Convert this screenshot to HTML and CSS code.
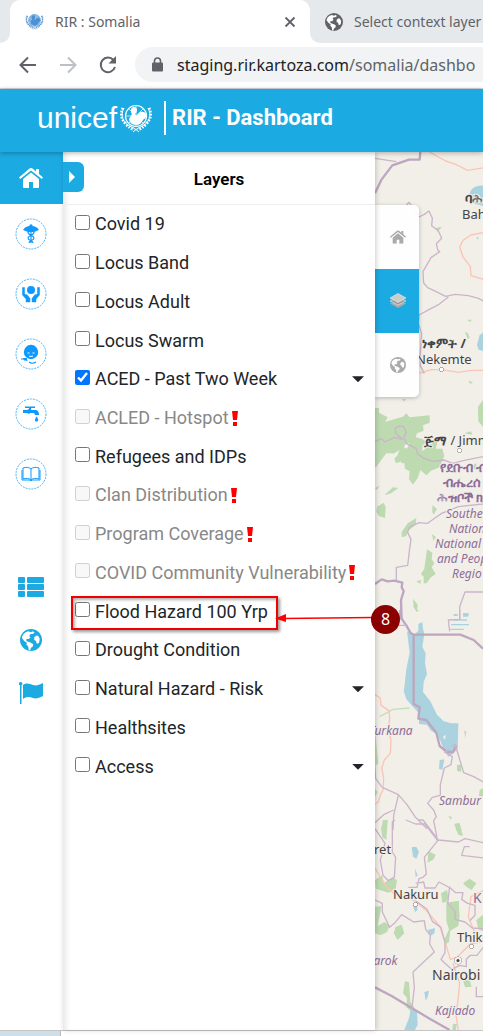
FILE: index.html
```html
<!DOCTYPE html>
<html lang="en">
<head>
<meta charset="utf-8">
<meta name="viewport" content="width=device-width, initial-scale=1">
<title>RIR : Somalia</title>
<link rel="stylesheet" href="styles.css">
</head>
<body>
<svg class="defs" aria-hidden="true">
  <symbol id="globe" viewBox="0 0 24 24"><circle cx="12" cy="12" r="12" fill="currentColor"/><path class="land" d="M9 2.500l3 1 2-1 2 1.500-2 1.500-2.500 0-1.500 2.500 1.500 1-2 2-2.500 0 0 2 2 1 3 1 2.500 1.500-.500 2.500-2 1.500-1 3-1.500-.500-.500-4-2-2 .500-2-3-2-2.500-3.500C2.500 6.500 5 3.500 9 2.500zM15.500 9l2.500-2 2 .500 1.500 3-.500 4-1.500 1.500-1.500-.500-.500-2.500-2-1z"/></symbol>
  <symbol id="home" viewBox="0 0 24 20"><path fill="currentColor" d="M12 4.500 20 11v8q0 1-1 1h-5v-6h-4v6H5q-1 0-1-1v-8zM12 0q.8 0 1.500.6L17 3.500V1h3v5l4 3.500-1.200 1.500L12 2.500 1.200 11 0 9.500 10.500.6Q11.200 0 12 0z"/></symbol>
  <symbol id="emblem" viewBox="0 0 32 30"><g fill="none" stroke="currentColor"><circle cx="16" cy="13" r="10.500" stroke-width="1.200"/><path d="M6 13h20M16 3v20M9 6l14 14M23 6 9 20" stroke-width=".7"/><path d="M4 5C0 12 2 21 14 25l5 4M28 5c4 7 2 16-10 20l-5 4" stroke-width="1"/><path d="M3 5Q-1 13 5 20T14 26M29 5q4 8-2 15t-9 6" stroke-width="2.800" stroke-dasharray="1.700 1.300"/></g><path fill="currentColor" d="M11 7c0-4 6-4 6 0 0 2-1 3-2 4l2 3c0-5 7-7 9-3 1 4-2 5-3 6-1 3-4 5-7 5-4 0-7-3-7-6l3-5c-1-1-1-2-1-4z"/></symbol>
</svg>

<nav class="tabs" aria-label="Browser tabs">
  <span class="tab-edge"></span>
  <div class="tab active">
    <svg class="favicon blue" viewBox="0 0 32 30"><circle cx="16" cy="13" r="10" fill="#4a90d2" opacity=".6"/><use href="#emblem"/></svg>
    <span class="tab-title">RIR : Somalia</span>
    <button class="plain close" aria-label="Close tab"><svg width="12" height="12" viewBox="0 0 12 12"><path d="m1.500 1.500 9 9m0-9-9 9" stroke="#5f6368" stroke-width="1.800"/></svg></button>
  </div>
  <div class="tab next">
    <svg class="tab-globe" width="18" height="18" viewBox="0 0 24 24"><use href="#globe"/></svg>
    <span class="tab-title">Select context layer</span>
  </div>
</nav>

<div class="toolbar">
  <button class="plain" aria-label="Back"><svg width="18" height="18" viewBox="0 0 18 18" fill="none" stroke="#5f6368" stroke-width="2"><path d="M17 9H2M9 1.500 1.500 9 9 16.500"/></svg></button>
  <button class="plain" aria-label="Forward" disabled><svg width="18" height="18" viewBox="0 0 18 18" fill="none" stroke="#bdc1c6" stroke-width="2"><path d="M1 9h15M9 1.500 16.500 9 9 16.500"/></svg></button>
  <button class="plain" aria-label="Reload"><svg width="18" height="18" viewBox="0 0 18 18"><path d="M14.500 4A7.300 7.300 0 1 0 16 11" fill="none" stroke="#5f6368" stroke-width="2"/><path d="M17 0v7.500h-7.500z" fill="#5f6368"/></svg></button>
  <div class="address">
    <svg width="11" height="15" viewBox="0 0 11 15"><path d="M2.500 6V4a3 3 0 0 1 6 0v2" fill="none" stroke="#5f6368" stroke-width="1.600"/><rect y="5.500" width="11" height="9" rx="1" fill="#5f6368"/></svg>
    <span class="url">staging.rir.kartoza.com<span class="path">/somalia/dashbo</span></span>
  </div>
</div>

<header class="header">
  <span class="brand">unicef</span>
  <svg class="brand-emblem" viewBox="0 0 32 30"><use href="#emblem"/></svg>
  <h1>RIR - Dashboard</h1>
</header>

<main class="main">
  <nav class="sidebar" aria-label="Sections">
    <a class="side-home" href="#home" aria-label="Home"><svg width="24" height="20"><use href="#home"/></svg></a>
    <div class="side-group circles">
      <a href="#health" aria-label="Health"><svg viewBox="0 0 32 32"><circle class="ring" cx="16" cy="16" r="15"/><path d="M8 12c2-3 4-4 7-4h2c3 0 5 1 7 4-2 1-3 1-5 2h-6c-2-1-3-1-5-2z"/><circle cx="16" cy="8" r="1.700"/><path d="M16 8v17M13 14c0 4 6 3 6 6s-5 2-5 5M19 14c0 4-6 3-6 6s5 2 5 5" fill="none" stroke="currentColor" stroke-width="1.200"/></svg></a>
      <a href="#protection" aria-label="Protection"><svg viewBox="0 0 32 32"><circle class="ring" cx="16" cy="16" r="15"/><circle cx="16" cy="12" r="4"/><path d="M7.500 9.500h2v6l1.500 1.500 1-.500 3 4v3.500h-4v-3l-3.500-4zM24.500 9.500h-2v6L21 17l-1-.500-3 4v3.500h4v-3l3.500-4z" stroke="currentColor" stroke-width=".5"/></svg></a>
      <a href="#nutrition" aria-label="Nutrition"><svg viewBox="0 0 32 32"><circle class="ring" cx="16" cy="16" r="15"/><circle cx="16" cy="14" r="7.200"/><path d="M12.500 15h2m3 0h2M14 18q2 1 4 0" stroke="#fff" fill="none"/><path d="M6 21h4l2.500 1.500M14 24q3 2.500 7 0" stroke="currentColor" stroke-width="1.200" fill="none"/><path d="M8 20h4v2.500H9z"/></svg></a>
      <a href="#water" aria-label="Water"><svg viewBox="0 0 32 32"><circle class="ring" cx="16" cy="16" r="15"/><path d="M10 8.500h10v1.500h-4v2h4c3 0 4 2 4 5h-4q0-2-2-2h-3l-1 1-2-1H8v-3h4l2-1v-1h-4zM21.500 18.500c3 4 1.500 5 0 5s-2.500-1 0-5z"/></svg></a>
      <a href="#education" aria-label="Education"><svg viewBox="0 0 32 32"><circle class="ring" cx="16" cy="16" r="15"/><path d="M16 11c-2-2-5-2-8-1v11c3-1 6-1 8 1 2-2 5-2 8-1V10c-3-1-6-1-8 1zv11M7 12v10h8l1 1 1-1h8V12" fill="none" stroke="currentColor" stroke-width="1"/></svg></a>
    </div>
    <div class="side-group tools">
      <a href="#list" aria-label="List"><svg width="26" height="20" viewBox="0 0 26 20" fill="currentColor"><rect width="7" height="6" rx="1"/><rect x="9" width="17" height="6" rx="1"/><rect y="7" width="7" height="6" rx="1"/><rect x="9" y="7" width="17" height="6" rx="1"/><rect y="14" width="7" height="6" rx="1"/><rect x="9" y="14" width="17" height="6" rx="1"/></svg></a>
      <a href="#world" aria-label="World"><svg width="22" height="22"><use href="#globe"/></svg></a>
      <a href="#flag" aria-label="Flag"><svg width="24" height="22" viewBox="0 0 24 22" fill="currentColor"><circle cx="1.700" cy="1.800" r="1.800"/><path d="M1 2h1.500v20H1zM4 3c4-3 7-1 10 0s6 0 10-2v13c-4 2-7 3-10 2s-6-2-10 1z"/></svg></a>
    </div>
  </nav>

  <section class="panel" aria-labelledby="layers-title">
    <button class="collapse" aria-label="Toggle panel"><svg width="6" height="12" viewBox="0 0 6 12"><path d="M0 0v12l6-6z" fill="#fff"/></svg></button>
    <h2 id="layers-title">Layers</h2>
    <ul class="layers">
      <li><label><input type="checkbox">Covid 19</label></li>
      <li><label><input type="checkbox">Locus Band</label></li>
      <li><label><input type="checkbox">Locus Adult</label></li>
      <li><label><input type="checkbox">Locus Swarm</label></li>
      <li><label><input type="checkbox" checked>ACED - Past Two Week</label><button class="caret" aria-label="Expand ACED"></button></li>
      <li class="off"><label><input type="checkbox" disabled>ACLED - Hotspot</label><svg class="warn" viewBox="0 0 6 15"><path d="M0 0h6L5 9H1zM1 11h4v4H1z"/></svg></li>
      <li><label><input type="checkbox">Refugees and IDPs</label></li>
      <li class="off"><label><input type="checkbox" disabled>Clan Distribution</label><svg class="warn" viewBox="0 0 6 15"><path d="M0 0h6L5 9H1zM1 11h4v4H1z"/></svg></li>
      <li class="off"><label><input type="checkbox" disabled>Program Coverage</label><svg class="warn" viewBox="0 0 6 15"><path d="M0 0h6L5 9H1zM1 11h4v4H1z"/></svg></li>
      <li class="off"><label><input type="checkbox" disabled>COVID Community Vulnerability</label><svg class="warn" viewBox="0 0 6 15"><path d="M0 0h6L5 9H1zM1 11h4v4H1z"/></svg></li>
      <li class="marked"><label><input type="checkbox">Flood Hazard 100 Yrp</label>
        <span class="mark-box"></span>
        <svg class="mark-arrow" width="98" height="12" viewBox="0 0 98 12"><path d="M8 6.500 98 5.500" stroke="red" stroke-width="1.500"/><path d="M0 6.500 11 2v8z" fill="red"/></svg>
        <span class="mark-badge">8</span>
      </li>
      <li><label><input type="checkbox">Drought Condition</label></li>
      <li><label><input type="checkbox">Natural Hazard - Risk</label><button class="caret" aria-label="Expand Natural Hazard"></button></li>
      <li><label><input type="checkbox">Healthsites</label></li>
      <li><label><input type="checkbox">Access</label><button class="caret" aria-label="Expand Access"></button></li>
    </ul>
  </section>

  <section class="map" aria-label="Map">
    <svg class="map-art" viewBox="375 152 108 878" preserveAspectRatio="xMinYMin slice">
      <g transform="translate(363 145) scale(.33333)">
        <g class="water"><path d="M320 150c0-20 20-32 45-28v62l-30-8-2-14zM342 600l8-30 15-10v60l-18-6zM340 276l8 2-4 6z"/></g>
        <g class="wood"><path d="M306 560l8 4 6 14-6 4zM312 524l14 0-4 8zM318 706l12 8-10 2zM118 762h12l-8 8zM216 250l20-5-10 15z"/></g>
        <g class="road"><path d="M198 20l50 28 30 10 36 18 50-8M364 262l-40 8-24 16-10 20 10 30 22 28 2 28 40 12M170 684l36-10 30 0 50 8 40-6 40 0"/></g>
        <g class="border"><path class="thick" d="M36 145l20-42 32-42 50-17 32 0 2-24"/><path d="M36 40l64 10M130 180l8-8 10 14 20 30 16-8 14-10 10 22-2 22 16 12 6 8 8 18-16 16 4 18 6 6-26 18-24 42 2 34 12 14 30 14 24 12 28-6 40 4 30 8 20 10M168 510l30-16 30-16 28-22M168 510l-2 24 10 32-4 60 0 36 12 24"/></g>
      </g>
      <g transform="translate(363 400) scale(.33333)">
        <g class="wood"><path d="M36 24l12 0 0 14 26 14-8 14 40-12 14-4 10-10 10 12 60-6 0 22-20 8 2 16-20 8-4 12 18 4 16 10-14 10 0 18 24-20 24-16-8 28 20 0 6 22-14 34-26 10-14 14-18-16-8 24-14 20-12-16 2-24-14-8-2-16-26-2-8-28-20 0-30 40-20 12-10-14zM42 320l20-12 6 14-2 32-18-6-8-12zM70 280l20-18 16 2-22 16-18 6zM134 370l26-16-2 20-24 20-4 14-14 4 0-16 10-14zM345 20l15-20v80l-14-16zM208 316l14 10-10 18-4-8zM192 448l16 10-2 20 8 12-8 12 12 20-14 10-14 18-8 0 0-20-8-8 10-16zM150 596l14 18-2 22-10-14zM160 544l14-4-2 12z"/><path d="M36 264l14-8-8 14zM304 100l20-6 4 10zM320 200l20-10v20zM207 402l12 10-8 10z"/></g>
        <path fill="#f2efe9" d="M76 176l18-16 16-10-8 18-18 16zM96 192l20-8-8 20zM122 142l8-12 10-2-8 18z"/>
        <g class="border"><path class="thick" d="M36 552l20-14 18 6 20-2 24 6-2 14 6 12-8 26 2 60"/><path d="M36 124l20-8 10 10 20-10 10-4 22 6-20-18-2-14 12-8 14 2 8 18-8 14 8 18 30 16 4 16 20 14 28 8 30-4 28 10 30-8 30-6 40-8M100 540l0-38 34-6 6-50 4-28-10-20 4-16 30-14 26 2 22-16 20-14 50-20 34-4 40-4M290 660v-40l16-44h54"/></g>
        <g class="water"><path d="M272 642h8v6h-8zM300 640h16v10h-16z"/></g>
      </g>
      <g transform="translate(363 610) scale(.33333)">
        <path fill="#aad3df" d="M132 64l22 10 12-12 0-20 12-6 2 20 4 16-6 38 10 20-2 30 6 32-10 24-2 30 22 28 20 40 20 20 22 6 22 0-2 76-12 14-16 10-14-24-10-24-12-20-18-12-10-16-24-2 0-32-18-20 -20-22-8-26 2-10 6-54 10-50zM230 450l14-2-6 32-10-4zM274 12h10v6h-10zM300 10h16v8h-16zM272 28h40v4h-40zM264 42h54v4h-54zM262 56h40v4h-40z"/>
        <path fill="#f2efe9" d="M240 380l8-6-2 16z"/>
        <g class="wood"><path d="M36 360l10 100-10 10zM36 536l8 10-8 16zM282 464l14 0-2 22-12-4zM350 540l12-6v26l-14-2zM256 618l10 2-2 10zM276 644l14-4 6 22h-16zM60 650l14-20-4 30h-12zM158 0h10l-6 6zM304 360l6 6-4 18z"/><path d="M50 320l40-22 50-4" fill="none" stroke="#c4dfb7" stroke-width="4"/></g>
        <g class="road"><path d="M36 254l16 10 2 22 24 16 2 24-4 34 8 30-2 40-18 20-8 24 6 30-2 36-8 16-6 20-10 6"/></g>
        <g class="border"><path class="thick" d="M112 0v20l20 30 10 18 10 6h140l40 16 28 26M152 74v200l0 8 18 10-4 34 24 4 30 38 10 40 22 18 18 0 10-20"/><path d="M108 46h26M260 64l-4-34 34-2V0M266 408l10-6 26 86 30 12 30 16M260 420l-16 6 24 14-4 24-20 10-12 50 0 32-24 6-14 18 18 20 8 20-8 12 10 50M36 470l2 36 20 26 48 22 26 30 24 36 36 36M106 556l-14 60-2 44M92 600l-30 14-26 24"/></g>
      </g>
      <g transform="translate(363 820) scale(.33333)">
        <g class="wood"><path d="M60 0h14l-4 60-12-8-4-26zM274 12l14-4 12 40-14-4zM196 94l22 10-6 14-18 10zM36 180l22-14 4 24 26-18 14 8-4 26-22 12-38-12zM36 260l20-2-6 30-6 30 20-12 16 10-8 20-20 10-16-6zM98 320l18-6 8 26-20 20-12-20zM234 220l18-10 4 20-6 16-12 2zM250 248l38-6 0 22 2 24-4 30-24 14-4 34-12 8 0-20 12-26-8-24zM300 480l20 0 6 20-20 2zM126 484l12 2 4 60 12 16-10 12-14-12 2-28-12-14zM270 612h12l-4 18h-10zM300 190l20-14 20 14-14 20-16-10zM340 300l20-16v50l-14-6z"/></g>
        <g class="water"><path d="M146 82l14-2 8 16-8 20-10-6zM156 146l8 20-6 6zM150 256l10-4 4 18-8 6zM194 330l22-6-2 16-12 8zM184 516l14-4-4 20-6 10zM144 564l18 10 2 40-8 16h-32l14-36z"/></g>
        <g class="road"><path d="M36 144l34 56 26 24 60 18 34 30 40 46 20 60 12 40 20-6 40-40 30-6M270 430l20 60-6 60-6 30 8 50M364 210l-40 20-8 60 20 50-10 40"/></g>
        <g class="border"><path class="thick" d="M36 502l50 26 60 36 54 32 60 34"/><path d="M96 0l-8 6 0 90 10 16-4 60-18 10-16-16-8-46 14-50-30-44M128 0l30 12 28 0 38 50-40 50 6 50-10 10-12 4-6 26-26 0M166 0h14l46 60 60 6 20-10 54 12M320 80l-16 0-8 26 66 8M158 190l24-4 4 18 30 0 12-18 34 18 16 14 22 0-4 20 18 12 22 6 0 30-16 16M36 240l22 10 0 26 22 46 16-14 20-24 36 22 32-4 4 26 14 18-2 26 14 24-64 60 4 46-8 70M160 244l32 24 16 36 26 18 12 46 0 30-12 20 10 10 22 20 24-12 20 4 0-22 12-12 20 0 20-26 20 4M260 200l-6 50 22 24 0 24 30 8 22 18 34 2M340 500v30h20"/></g>
      </g>
      <g class="city">
        <text x="465" y="203" class="ethiopic">ባሕ</text><text x="462" y="219">Bah</text>
        <text x="422" y="348" class="ethiopic">ነቀምት /</text><text x="416" y="364">Nekemte</text>
        <text x="424" y="445"><tspan class="ethiopic">ጅማ</tspan> / Jimm</text>
        <text x="374" y="854">ret</text><text x="393" y="899">Nakuru</text><text x="457" y="942">Thika</text><text x="432" y="980" class="big">Nairobi</text>
        <g fill="#fff" stroke="#666"><circle cx="441.500" cy="369.500" r="2"/><circle cx="459.500" cy="450.500" r="2"/><circle cx="415.500" cy="904.500" r="2"/><circle cx="471.500" cy="946.500" r="2"/><circle cx="458" cy="960.500" r="3.500"/></g><circle cx="458" cy="960.500" r="1.500"/>
      </g>
      <g class="region">
        <g class="ethiopic"><text x="440" y="472">የደቡብ ብ</text><text x="443" y="487">ብሔረሰ</text><text x="437" y="502">ሕዝቦች ክ</text></g>
        <text x="446" y="518">Southe</text><text x="449" y="533">Nation</text><text x="435" y="548">National</text><text x="437" y="563">and Peop</text><text x="452" y="578">Regio</text>
        <text x="369" y="735">Turkana</text><text x="439" y="805">Sambur</text><text x="365" y="965">Narok</text><text x="435" y="1015">Kajiado</text><text class="upright big" x="473" y="903">K</text>
      </g>
    </svg>
    <div class="map-tools">
      <button aria-label="Overview"><svg width="16" height="14" viewBox="0 0 24 20"><use href="#home"/></svg></button>
      <button class="selected" aria-label="Map layers"><svg width="16" height="16" viewBox="0 0 16 16"><path d="M0 10.500 8 7l8 3.500L8 15z" fill="#aaa"/><path d="M0 8l8-3.500L16 8l-8 4z" fill="#999" stroke="#eee" stroke-width=".6"/><path d="M0 5l8-4.500L16 5 8 9.500z" fill="#ccc" stroke="#eee" stroke-width=".6"/></svg></button>
      <button aria-label="Base map"><svg width="16" height="16"><use href="#globe"/></svg></button>
    </div>
  </section>
</main>
<footer class="strip"><span></span></footer>
</body>
</html>
```
FILE: styles.css
```css
* { box-sizing: border-box; }
body {
  margin: 0;
  min-height: 100vh;
  display: flex;
  flex-direction: column;
  overflow: hidden;
  background: #fff;
  color: #212529;
  font-family: Roboto, "Liberation Sans", sans-serif;
  font-size: 18px;
}
button { padding: 0; border: 0; background: none; font: inherit; }
svg { display: block; flex: none; }
.defs { position: absolute; width: 0; height: 0; }
.land { fill: #fff; }

.tabs { display: flex; height: 43px; overflow: hidden; background: #fff; font-family: "Noto Sans", sans-serif; font-size: 14px; color: #5f6368; white-space: nowrap; }
.tab-edge { flex: none; width: 10px; background: #e6e9ec; border-bottom-right-radius: 10px; }
.tab { display: flex; align-items: center; }
.tab.active { flex: none; width: 300px; padding: 0 14px 0 15px; gap: 11px; background: #fff; position: relative; }
.tab.active::before { content: ""; position: absolute; inset: 0 0 12px; border-radius: 10px 10px 0 0; box-shadow: 0 -10px 0 #e6e9ec; }
.favicon { width: 19px; height: 17px; }
.blue { color: #4a90d2; }
.close { margin-left: auto; }
.tab.next { flex: 1; padding-left: 15px; gap: 11px; background: #e6e9ec; border-bottom-left-radius: 10px; }
.tab-globe { color: #5f6368; }

.toolbar { display: flex; align-items: center; height: 46px; padding: 0 0 2px 19px; gap: 22px; border-bottom: 1px solid #d5d8db; overflow: hidden; }
.address { flex: 1; display: flex; align-items: center; gap: 14px; height: 35px; margin-left: -4px; padding-left: 17px; border-radius: 18px 0 0 18px; background: #f1f3f4; overflow: hidden; }
.url { font-family: "Noto Sans", sans-serif; font-size: 16px; color: #202124; white-space: nowrap; }
.path { color: #5f6368; }

.header { position: relative; z-index: 3; display: flex; align-items: center; height: 63px; padding: 0 0 6px 37px; background: #1caae3; color: #fff; box-shadow: 0 1px 5px rgba(0,0,0,.3); }
.brand { font-family: "Liberation Sans", sans-serif; font-size: 30px; line-height: 34px; }
.brand-emblem { width: 32px; height: 30px; margin: 0 12px 0 3px; }
.header h1 { margin: 0; padding-left: 6px; border-left: 2px solid #fff; font-size: 22px; line-height: 34px; font-weight: 700; white-space: nowrap; }

.main { flex: 1; display: flex; }
.sidebar { flex: none; width: 63px; display: flex; flex-direction: column; color: #1caae3; }
.sidebar a { display: flex; align-items: center; justify-content: center; padding-right: 1px; color: inherit; }
.side-home { height: 52px; background: #1caae3; }
.sidebar .side-home { color: #fff; }
.side-group { display: flex; flex-direction: column; }
.circles { color: #0d99ff; }
.circles a { height: 60px; }
.circles svg { width: 32px; height: 32px; fill: currentColor; }
.circles .ring { fill: none; stroke: #4cb2fa; stroke-dasharray: 2 1; }
.tools { padding-top: 56px; }
.tools a { height: 53px; }

.panel { position: relative; z-index: 2; flex: none; width: 312px; background: #fff; box-shadow: inset 6px 0 6px -4px rgba(0,0,0,.12), 1px 0 5px rgba(0,0,0,.2); }
.collapse { position: absolute; left: 0; top: 10px; width: 21px; height: 30px; padding-right: 4px; display: flex; align-items: center; justify-content: center; border-radius: 0 6px 6px 0; background: #1caae3; }
.panel h2 { margin: 0; height: 53px; border-bottom: 1px solid #eee; color: #000; font-size: 17px; line-height: 54px; font-weight: 600; text-align: center; }
.layers { list-style: none; margin: 0; padding: 0 11px 0 12px; display: grid; grid-template-rows: repeat(15, 1fr); height: 581px; }
.layers li { display: flex; align-items: center; }
.layers label { display: flex; align-items: center; gap: 5px; line-height: 20px; white-space: nowrap; }
.layers input { width: 15px; height: 15px; margin: 0 0 4px; }
.off { color: #888; }
.warn { width: 6px; height: 15px; margin-left: 3px; fill: red; }
.caret { width: 12px; height: 6px; margin-left: auto; background: #212529; clip-path: polygon(0 0, 100% 0, 50% 100%); }
.marked { position: relative; }
.mark-box { position: absolute; left: -4px; top: 4px; width: 207px; height: 34px; border: 2px solid #f20000; box-shadow: 2px 2px 3px rgba(0,0,0,.4), inset 2px 2px 3px rgba(0,0,0,.3); pointer-events: none; }
.mark-arrow { position: absolute; left: 200px; top: 20px; }
.mark-badge { position: absolute; left: 296px; top: 13px; width: 29px; height: 29px; border-radius: 50%; background: #8b0000; color: #fff; font-family: "Noto Sans", sans-serif; font-size: 16px; line-height: 29px; text-align: center; }

.map { position: relative; flex: 1; min-width: 0; overflow: hidden; background: #f2efe9; }
.map-art { position: absolute; inset: 0; width: 100%; height: 100%; }
.water { fill: #aad3df; }
.wood { fill: #bddab1; }
.road { fill: none; stroke: #fac5b5; stroke-width: 4; stroke-linejoin: round; }
.border { fill: none; stroke: #cbb5ca; stroke-width: 4; stroke-linejoin: round; }
.border .thick { stroke: #bda6bf; stroke-width: 7; }
.city, .region { font-family: "Noto Sans", sans-serif; font-size: 13px; paint-order: stroke; stroke: #f2efe9; stroke-width: 2px; }
.city text, .region text { paint-order: stroke; }
.city { fill: #444; }
.city g { stroke-width: 1px; }
.region { fill: #8d6d98; font-size: 12px; font-style: italic; }
.upright { font-style: normal; }
.ethiopic { font-style: normal; font-size: 13px; font-weight: 700; }
.big { font-size: 14px; }
.map-tools { position: absolute; left: 0; top: 53px; width: 44px; border-radius: 0 5px 5px 0; overflow: hidden; background: rgba(255,255,255,.93); box-shadow: 0 1px 4px rgba(0,0,0,.25); color: #aaa; }
.map-tools button { display: flex; align-items: center; justify-content: center; width: 44px; height: 64px; padding-left: 2px; color: inherit; }
.map-tools .selected { background: #1caae3; }

.strip { height: 6px; border-top: 1px solid #c4c4c4; }
.strip span { display: block; width: 61px; height: 5px; background: #cfdfe9; border-right: 1px solid #bbb; }
```
